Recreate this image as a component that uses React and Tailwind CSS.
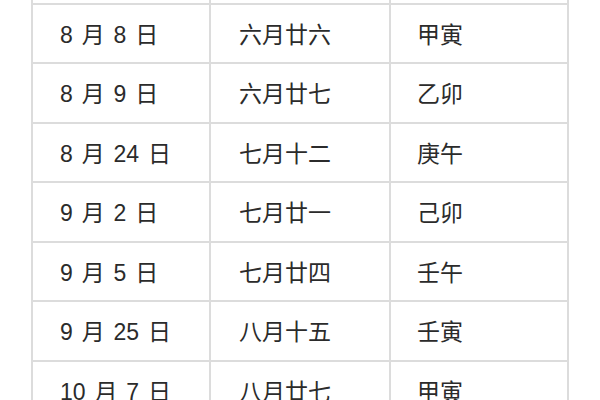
export default function App() {
  const rows = [
    ["", "", ""],
    ["8 月 8 日", "六月廿六", "甲寅"],
    ["8 月 9 日", "六月廿七", "乙卯"],
    ["8 月 24 日", "七月十二", "庚午"],
    ["9 月 2 日", "七月廿一", "己卯"],
    ["9 月 5 日", "七月廿四", "壬午"],
    ["9 月 25 日", "八月十五", "壬寅"],
    ["10 月 7 日", "八月廿七", "甲寅"],
  ];

  return (
    <div className="w-[600px] h-[400px] overflow-hidden bg-white font-['Liberation_Sans','Noto_Sans_CJK_SC',sans-serif] text-[23px] text-[#2b2b2b]">
      <div className="ml-[31px] mt-[-55px] w-[538px] border-l-2 border-r-2 border-[#dcdcdc]">
        {rows.map((r, i) => (
          <div
            key={i}
            className="grid grid-cols-[178px_180px_1fr] h-[59.5px] border-b-2 border-[#dcdcdc]"
          >
            <div className="flex items-center pl-[27px] pt-[3px] border-r-2 border-[#dcdcdc] whitespace-pre [word-spacing:2.5px]">
              {r[0]}
            </div>
            <div className="flex items-center pl-[28px] pt-[3px] border-r-2 border-[#dcdcdc]">
              {r[1]}
            </div>
            <div className="flex items-center pl-[26px] pt-[3px]">{r[2]}</div>
          </div>
        ))}
      </div>
    </div>
  );
}
